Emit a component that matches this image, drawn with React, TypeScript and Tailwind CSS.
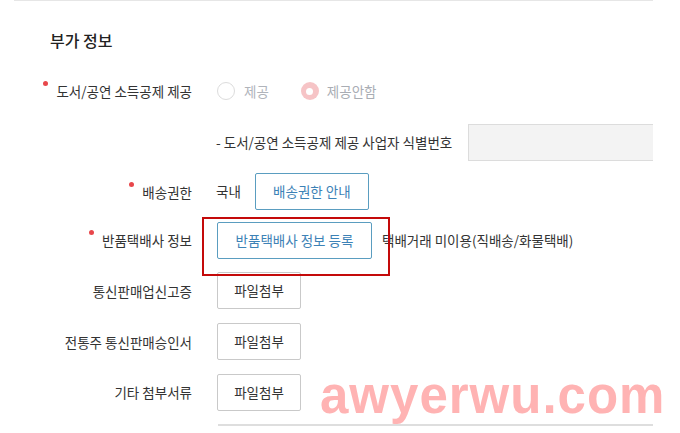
import { FC, ReactNode } from "react"

const Dot: FC = () => (
  <span className="mt-[-1px] mr-[8px] h-[5px] w-[5px] shrink-0 self-start rounded-full bg-[#e8474b]" />
)

const Row: FC<{ label?: string; required?: boolean; h: string; children: ReactNode }> = ({
  label,
  required,
  h,
  children,
}) => (
  <div className={`flex items-center ${h}`}>
    <div className="flex w-[178px] shrink-0 justify-end">
      {label && (
        <span className="flex items-start text-[13.5px] leading-[18px] text-[#333]">
          {required && <Dot />}
          {label}
        </span>
      )}
    </div>
    <div className="ml-[25px] flex items-center">{children}</div>
  </div>
)

const FileButton: FC = () => (
  <button className="h-[37px] w-[84px] rounded-[2px] border border-[#c9c9c9] bg-white text-[13.5px] text-[#333]">
    파일첨부
  </button>
)

const App: FC = () => {
  return (
    <div className="relative h-[433px] w-[680px] overflow-hidden bg-white font-['Noto_Sans_CJK_KR',sans-serif]">
      <div className="relative ml-[14px] h-full w-[639px] overflow-hidden border-t border-[#e6e6e6]">
        <h2 className="pt-[27px] pl-[36px] text-[16px] leading-[24px] font-medium text-[#222]">부가 정보</h2>

        <div className="mt-[14px] flex flex-col">
          <Row label="도서/공연 소득공제 제공" required h="h-[50px]">
            <label className="flex items-center">
              <span className="h-[18px] w-[18px] rounded-full border border-[#dcdcdc] bg-white" />
              <span className="ml-[9px] text-[13.5px] text-[#b0b4bb]">제공</span>
            </label>
            <label className="ml-[32px] flex items-center">
              <span className="flex h-[18px] w-[18px] items-center justify-center rounded-full bg-[#f6c4c6]">
                <span className="h-[7px] w-[7px] rounded-full bg-white" />
              </span>
              <span className="ml-[8px] text-[13.5px] text-[#a9adb4]">제공안함</span>
            </label>
          </Row>

          <Row h="h-[52px]">
            <span className="ml-[-1px] shrink-0 whitespace-nowrap text-[13.5px] text-[#333]">
              - 도서/공연 소득공제 제공 사업자 식별번호
            </span>
            <div className="ml-[16px] h-[37px] w-[220px] shrink-0 border border-[#dcdcdc] bg-[#f3f3f3]" />
          </Row>

          <Row label="배송권한" required h="h-[47px]">
            <span className="ml-[-1px] text-[13.5px] text-[#333]">국내</span>
            <button className="ml-[14px] h-[37px] w-[114px] rounded-[2px] border border-[#5a9dc0] bg-white text-[13.5px] text-[#3d82b6]">
              배송권한 안내
            </button>
          </Row>

          <Row label="반품택배사 정보" required h="h-[50px]">
            <div className="relative flex items-center">
              <button className="h-[37px] w-[155px] shrink-0 rounded-[2px] border border-[#5a9dc0] bg-white text-[13.5px] text-[#3d82b6]">
                반품택배사 정보 등록
              </button>
              <span className="ml-[10px] whitespace-nowrap text-[13.5px] text-[#333]">
                택배거래 미이용(직배송/화물택배)
              </span>
              <div className="absolute top-[-5px] left-[-15px] h-[59px] w-[188px] border-[2.5px] border-[#c40a0a]" />
            </div>
          </Row>

          <Row label="통신판매업신고증" h="h-[51px]">
            <FileButton />
          </Row>

          <Row label="전통주 통신판매승인서" h="h-[51px]">
            <FileButton />
          </Row>

          <Row label="기타 첨부서류" h="h-[50px]">
            <FileButton />
          </Row>

          <div className="mt-[7px] ml-[204px] h-[10px] border-t-2 border-[#dedede]" />
        </div>
      </div>

      <div className="absolute top-[366px] left-[320px] font-['Liberation_Sans',sans-serif] text-[51px] leading-[60px] font-bold tracking-[1px] text-[#ffb3b3]">
        awyerwu.com
      </div>
    </div>
  )
}

export default App
